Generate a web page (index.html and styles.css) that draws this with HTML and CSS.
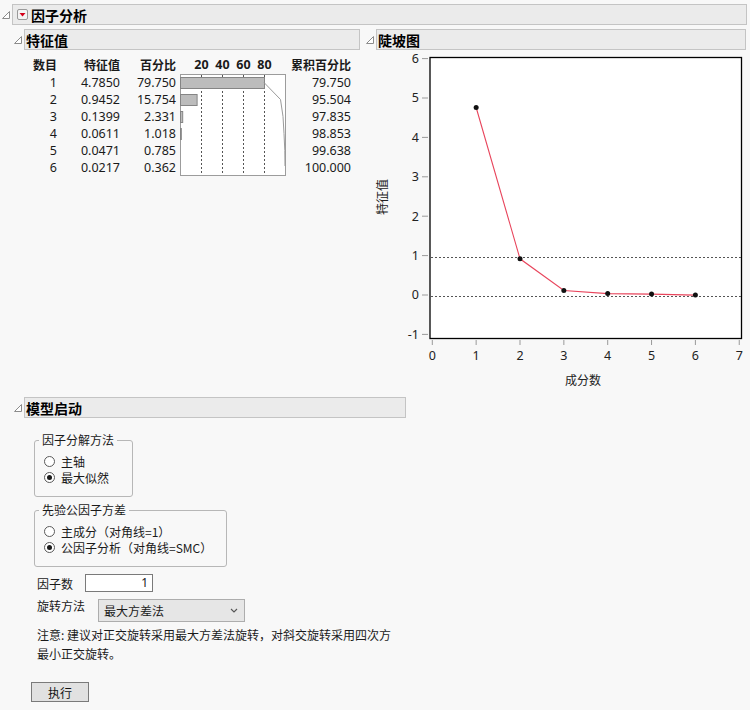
FILE: index.html
```html
<!DOCTYPE html>
<html lang="zh">
<head>
<meta charset="utf-8">
<title>因子分析</title>
<link rel="stylesheet" href="styles.css">
</head>
<body>
<div class="report">
  <div class="ol-row top">
    <svg class="tri" width="8" height="8" viewBox="0 0 8 8"><polygon points="0.5,7.5 7.5,7.5 7.5,0.5" fill="#fff" stroke="#8c8c8c"/></svg>
    <div class="ol-head">
      <span class="dd"><svg width="11" height="11" viewBox="0 0 11 11"><rect x="0.5" y="0.5" width="10" height="10" rx="1.5" fill="#f4f4f4" stroke="#9a9a9a"/><polygon points="2.5,4 8.5,4 5.5,7.5" fill="#d4001a"/></svg></span>
      <span>因子分析</span>
    </div>
  </div>
  <div class="ol-body">
    <div class="top-cols">
      <div class="col-left">
        <div class="ol-row">
          <svg class="tri" width="8" height="8" viewBox="0 0 8 8"><polygon points="0.5,7.5 7.5,7.5 7.5,0.5" fill="#fff" stroke="#8c8c8c"/></svg>
          <div class="ol-head">特征值</div>
        </div>
        <div class="eig">
          <div class="chart">
            <svg width="106" height="102" viewBox="0 0 106 102">
              <rect x="0.5" y="0.5" width="105" height="101" fill="#fff" stroke="#9c9c9c"/>
              <g stroke="#555" stroke-dasharray="2,2" stroke-width="1">
                <line x1="21.5" y1="1" x2="21.5" y2="101"/>
                <line x1="42.5" y1="1" x2="42.5" y2="101"/>
                <line x1="63.5" y1="1" x2="63.5" y2="101"/>
                <line x1="84.5" y1="1" x2="84.5" y2="101"/>
              </g>
              <g fill="#bcbcbc" stroke="#858585">
                <rect x="0.5" y="3.5" width="84" height="11"/>
                <rect x="0.5" y="20.5" width="16.6" height="11"/>
                <rect x="0.5" y="37.5" width="2.2" height="11"/>
                <rect x="0.5" y="54.5" width="0.8" height="11"/>
              </g>
              <polyline points="84,8.5 100.5,25.5 103,42.5 104,59.5 104.8,76.5 105,92" fill="none" stroke="#9a9a9a" stroke-width="1"/>
            </svg>
          </div>
          <div class="h">数目</div>
          <div class="h">特征值</div>
          <div class="h">百分比</div>
          <div class="axis"><span>20</span><span>40</span><span>60</span><span>80</span></div>
          <div class="h">累积百分比</div>

          <div>1</div><div>4.7850</div><div>79.750</div><div>79.750</div>
          <div>2</div><div>0.9452</div><div>15.754</div><div>95.504</div>
          <div>3</div><div>0.1399</div><div>2.331</div><div>97.835</div>
          <div>4</div><div>0.0611</div><div>1.018</div><div>98.853</div>
          <div>5</div><div>0.0471</div><div>0.785</div><div>99.638</div>
          <div>6</div><div>0.0217</div><div>0.362</div><div>100.000</div>
        </div>
      </div>
      <div class="col-right">
        <div class="ol-row">
          <svg class="tri" width="8" height="8" viewBox="0 0 8 8"><polygon points="0.5,7.5 7.5,7.5 7.5,0.5" fill="#fff" stroke="#8c8c8c"/></svg>
          <div class="ol-head">陡坡图</div>
        </div>
        <svg class="scree" width="380" height="345" viewBox="0 0 380 345">
          <rect x="64" y="7.5" width="311.5" height="281" fill="#fff" stroke="#000" stroke-width="1.3"/>
          <g stroke="#9a9a9a" stroke-width="1">
            <line x1="56" y1="8.6" x2="62" y2="8.6"/>
            <line x1="56" y1="48" x2="62" y2="48"/>
            <line x1="56" y1="87.4" x2="62" y2="87.4"/>
            <line x1="56" y1="126.8" x2="62" y2="126.8"/>
            <line x1="56" y1="166.2" x2="62" y2="166.2"/>
            <line x1="56" y1="205.6" x2="62" y2="205.6"/>
            <line x1="56" y1="245" x2="62" y2="245"/>
            <line x1="56" y1="284.4" x2="62" y2="284.4"/>
            <line x1="66.3" y1="290" x2="66.3" y2="295"/>
            <line x1="110.15" y1="290" x2="110.15" y2="295"/>
            <line x1="154" y1="290" x2="154" y2="295"/>
            <line x1="197.85" y1="290" x2="197.85" y2="295"/>
            <line x1="241.7" y1="290" x2="241.7" y2="295"/>
            <line x1="285.55" y1="290" x2="285.55" y2="295"/>
            <line x1="329.4" y1="290" x2="329.4" y2="295"/>
            <line x1="373.25" y1="290" x2="373.25" y2="295"/>
          </g>
          <g class="tick" text-anchor="end">
            <text x="53" y="13">6</text>
            <text x="53" y="52.4">5</text>
            <text x="53" y="91.8">4</text>
            <text x="53" y="131.2">3</text>
            <text x="53" y="170.6">2</text>
            <text x="53" y="210">1</text>
            <text x="53" y="249.4">0</text>
            <text x="53" y="288.8">-1</text>
          </g>
          <g class="tick" text-anchor="middle">
            <text x="66.3" y="310">0</text>
            <text x="110.15" y="310">1</text>
            <text x="154" y="310">2</text>
            <text x="197.85" y="310">3</text>
            <text x="241.7" y="310">4</text>
            <text x="285.55" y="310">5</text>
            <text x="329.4" y="310">6</text>
            <text x="373.25" y="310">7</text>
          </g>
          <g stroke="#555" stroke-dasharray="2,2" stroke-width="1">
            <line x1="65" y1="207.5" x2="375" y2="207.5"/>
            <line x1="65" y1="246.5" x2="375" y2="246.5"/>
          </g>
          <polyline points="110.15,57.5 154,208.8 197.85,240.5 241.7,243.6 285.55,244.1 329.4,245.1" fill="none" stroke="#e8455c" stroke-width="1.1"/>
          <g fill="#111">
            <circle cx="110.15" cy="57.5" r="2.5"/>
            <circle cx="154" cy="208.8" r="2.5"/>
            <circle cx="197.85" cy="240.5" r="2.5"/>
            <circle cx="241.7" cy="243.6" r="2.5"/>
            <circle cx="285.55" cy="244.1" r="2.5"/>
            <circle cx="329.4" cy="245.1" r="2.5"/>
          </g>
          <text class="label" x="217" y="335" text-anchor="middle">成分数</text>
          <text class="label" x="0" y="0" text-anchor="middle" transform="translate(21,147) rotate(-90)">特征值</text>
        </svg>
      </div>
    </div>

    <div class="ol-row model-row">
      <svg class="tri" width="8" height="8" viewBox="0 0 8 8"><polygon points="0.5,7.5 7.5,7.5 7.5,0.5" fill="#fff" stroke="#8c8c8c"/></svg>
      <div class="ol-head">模型启动</div>
    </div>
    <div class="model">
      <fieldset class="grp g1">
        <legend>因子分解方法</legend>
        <div class="radio-row"><span class="radio"></span>主轴</div>
        <div class="radio-row"><span class="radio on"></span>最大似然</div>
      </fieldset>
      <fieldset class="grp g2">
        <legend>先验公因子方差</legend>
        <div class="radio-row"><span class="radio"></span>主成分（对角线=1）</div>
        <div class="radio-row"><span class="radio on"></span>公因子分析（对角线=SMC）</div>
      </fieldset>
      <div class="field-row">
        <span class="lbl">因子数</span>
        <span class="num-input">1</span>
      </div>
      <div class="field-row rot">
        <span class="lbl">旋转方法</span>
        <span class="select">最大方差法<svg width="8" height="5" viewBox="0 0 8 5"><polyline points="1,1 4,4 7,1" fill="none" stroke="#555" stroke-width="1.1"/></svg></span>
      </div>
      <p class="note">注意: 建议对正交旋转采用最大方差法旋转，对斜交旋转采用四次方<br>最小正交旋转。</p>
      <button class="btn" type="button">执行</button>
    </div>
  </div>
</div>
</body>
</html>
```

FILE: styles.css
```css
* { box-sizing: border-box; }
body {
  margin: 0;
  background: #f8f8f8;
  color: #1a1a1a;
  font-family: "Noto Sans CJK SC", "Noto Sans", sans-serif;
  font-size: 12px;
}
.report { padding-top: 4px; width: 750px; }
.ol-row {
  display: flex;
  align-items: center;
  gap: 2px;
}
.ol-row.top { padding-left: 2px; padding-right: 3px; }
.tri { flex: none; display: block; }
.ol-head {
  flex: 1;
  height: 21px;
  background: #ebebeb;
  border: 1px solid #c4c4c4;
  font-weight: bold;
  font-size: 14px;
  line-height: 18px;
  display: flex;
  align-items: center;
  gap: 3px;
  padding-left: 1px;
  color: #000;
}
.ol-row.top .ol-head { padding-left: 4px; }
.dd { display: flex; }
.dd svg { display: block; }
.ol-body { padding-left: 14px; }
.top-cols {
  display: flex;
  gap: 6px;
  margin-top: 4px;
}
.col-left { width: 346px; }
.col-right { width: 380px; }
.scree { display: block; }
.scree .tick { font-family: "Noto Sans", sans-serif; font-size: 12.5px; fill: #222; }
.scree .label { font-family: "Noto Sans CJK SC", sans-serif; font-size: 12px; fill: #222; }

.eig {
  display: grid;
  grid-template-columns: 27px 63px 56px 110px 65px;
  grid-template-rows: 18px repeat(6, 17px);
  margin-top: 6px;
  padding-left: 16px;
  line-height: 17px;
  font-family: "Noto Sans", "Noto Sans CJK SC", sans-serif;
  font-size: 12.5px;
}
.eig > div { text-align: right; white-space: nowrap; }
.eig .h { font-family: "Noto Sans CJK SC", sans-serif; font-weight: bold; font-size: 12px; line-height: 18px; }
.eig .chart {
  grid-column: 4;
  grid-row: 2 / span 6;
  padding-left: 4px;
  text-align: left;
}
.eig .chart svg { display: block; }
.eig .axis {
  display: flex;
  padding-left: 15px;
  font-weight: bold;
  font-size: 12.5px;
  line-height: 18px;
}
.eig .axis span { width: 21px; text-align: center; }

.model-row { margin-top: 2px; }
.model-row .ol-head { flex: none; width: 382px; }
.model { padding-left: 20px; }
.grp {
  margin: 0;
  border: 1px solid #b7b7b7;
  border-radius: 3px;
  padding: 5px 4px 11px 9px;
  min-width: 0;
}
.grp legend {
  padding: 0 3px;
  margin-left: -5px;
  line-height: 16px;
  font-size: 12px;
  white-space: nowrap;
}
.g1 { margin-top: 14px; width: 99px; }
.g2 { margin-top: 5px; width: 193px; }
.radio-row {
  display: flex;
  align-items: center;
  height: 16px;
  gap: 6px;
  white-space: nowrap;
}
.radio {
  width: 11px;
  height: 11px;
  border: 1px solid #5a5a5a;
  border-radius: 50%;
  background: #fff;
  flex: none;
  position: relative;
}
.radio.on::after {
  content: "";
  position: absolute;
  left: 2px;
  top: 2px;
  width: 5px;
  height: 5px;
  border-radius: 50%;
  background: #1a1a1a;
}
.field-row {
  display: flex;
  align-items: center;
  margin-top: 7px;
  padding-left: 3px;
  height: 18px;
}
.field-row .lbl { width: 48px; }
.num-input {
  width: 68px;
  height: 18px;
  background: #fff;
  border: 1px solid #7a7a7a;
  text-align: right;
  padding-right: 4px;
  line-height: 16px;
  font-family: "Noto Sans", sans-serif;
}
.field-row.rot {
  height: 23px;
  align-items: flex-start;
}
.field-row.rot .lbl { width: 61px; line-height: 14px; }
.select {
  width: 147px;
  height: 23px;
  background: #e6e6e6;
  border: 1px solid #adadad;
  display: flex;
  align-items: center;
  justify-content: space-between;
  padding: 0 6px 0 5px;
  font-size: 12px;
}
.select svg { display: block; }
.note {
  margin: 3px 0 0 3px;
  line-height: 19px;
  font-size: 12px;
}
.btn {
  display: block;
  margin: 19px 0 0 -3px;
  width: 58px;
  height: 20px;
  background: #e1e1e1;
  border: 1px solid #7a7a7a;
  border-radius: 0;
  font-family: "Noto Sans CJK SC", sans-serif;
  font-size: 12px;
  padding: 0;
  color: #111;
}
```
